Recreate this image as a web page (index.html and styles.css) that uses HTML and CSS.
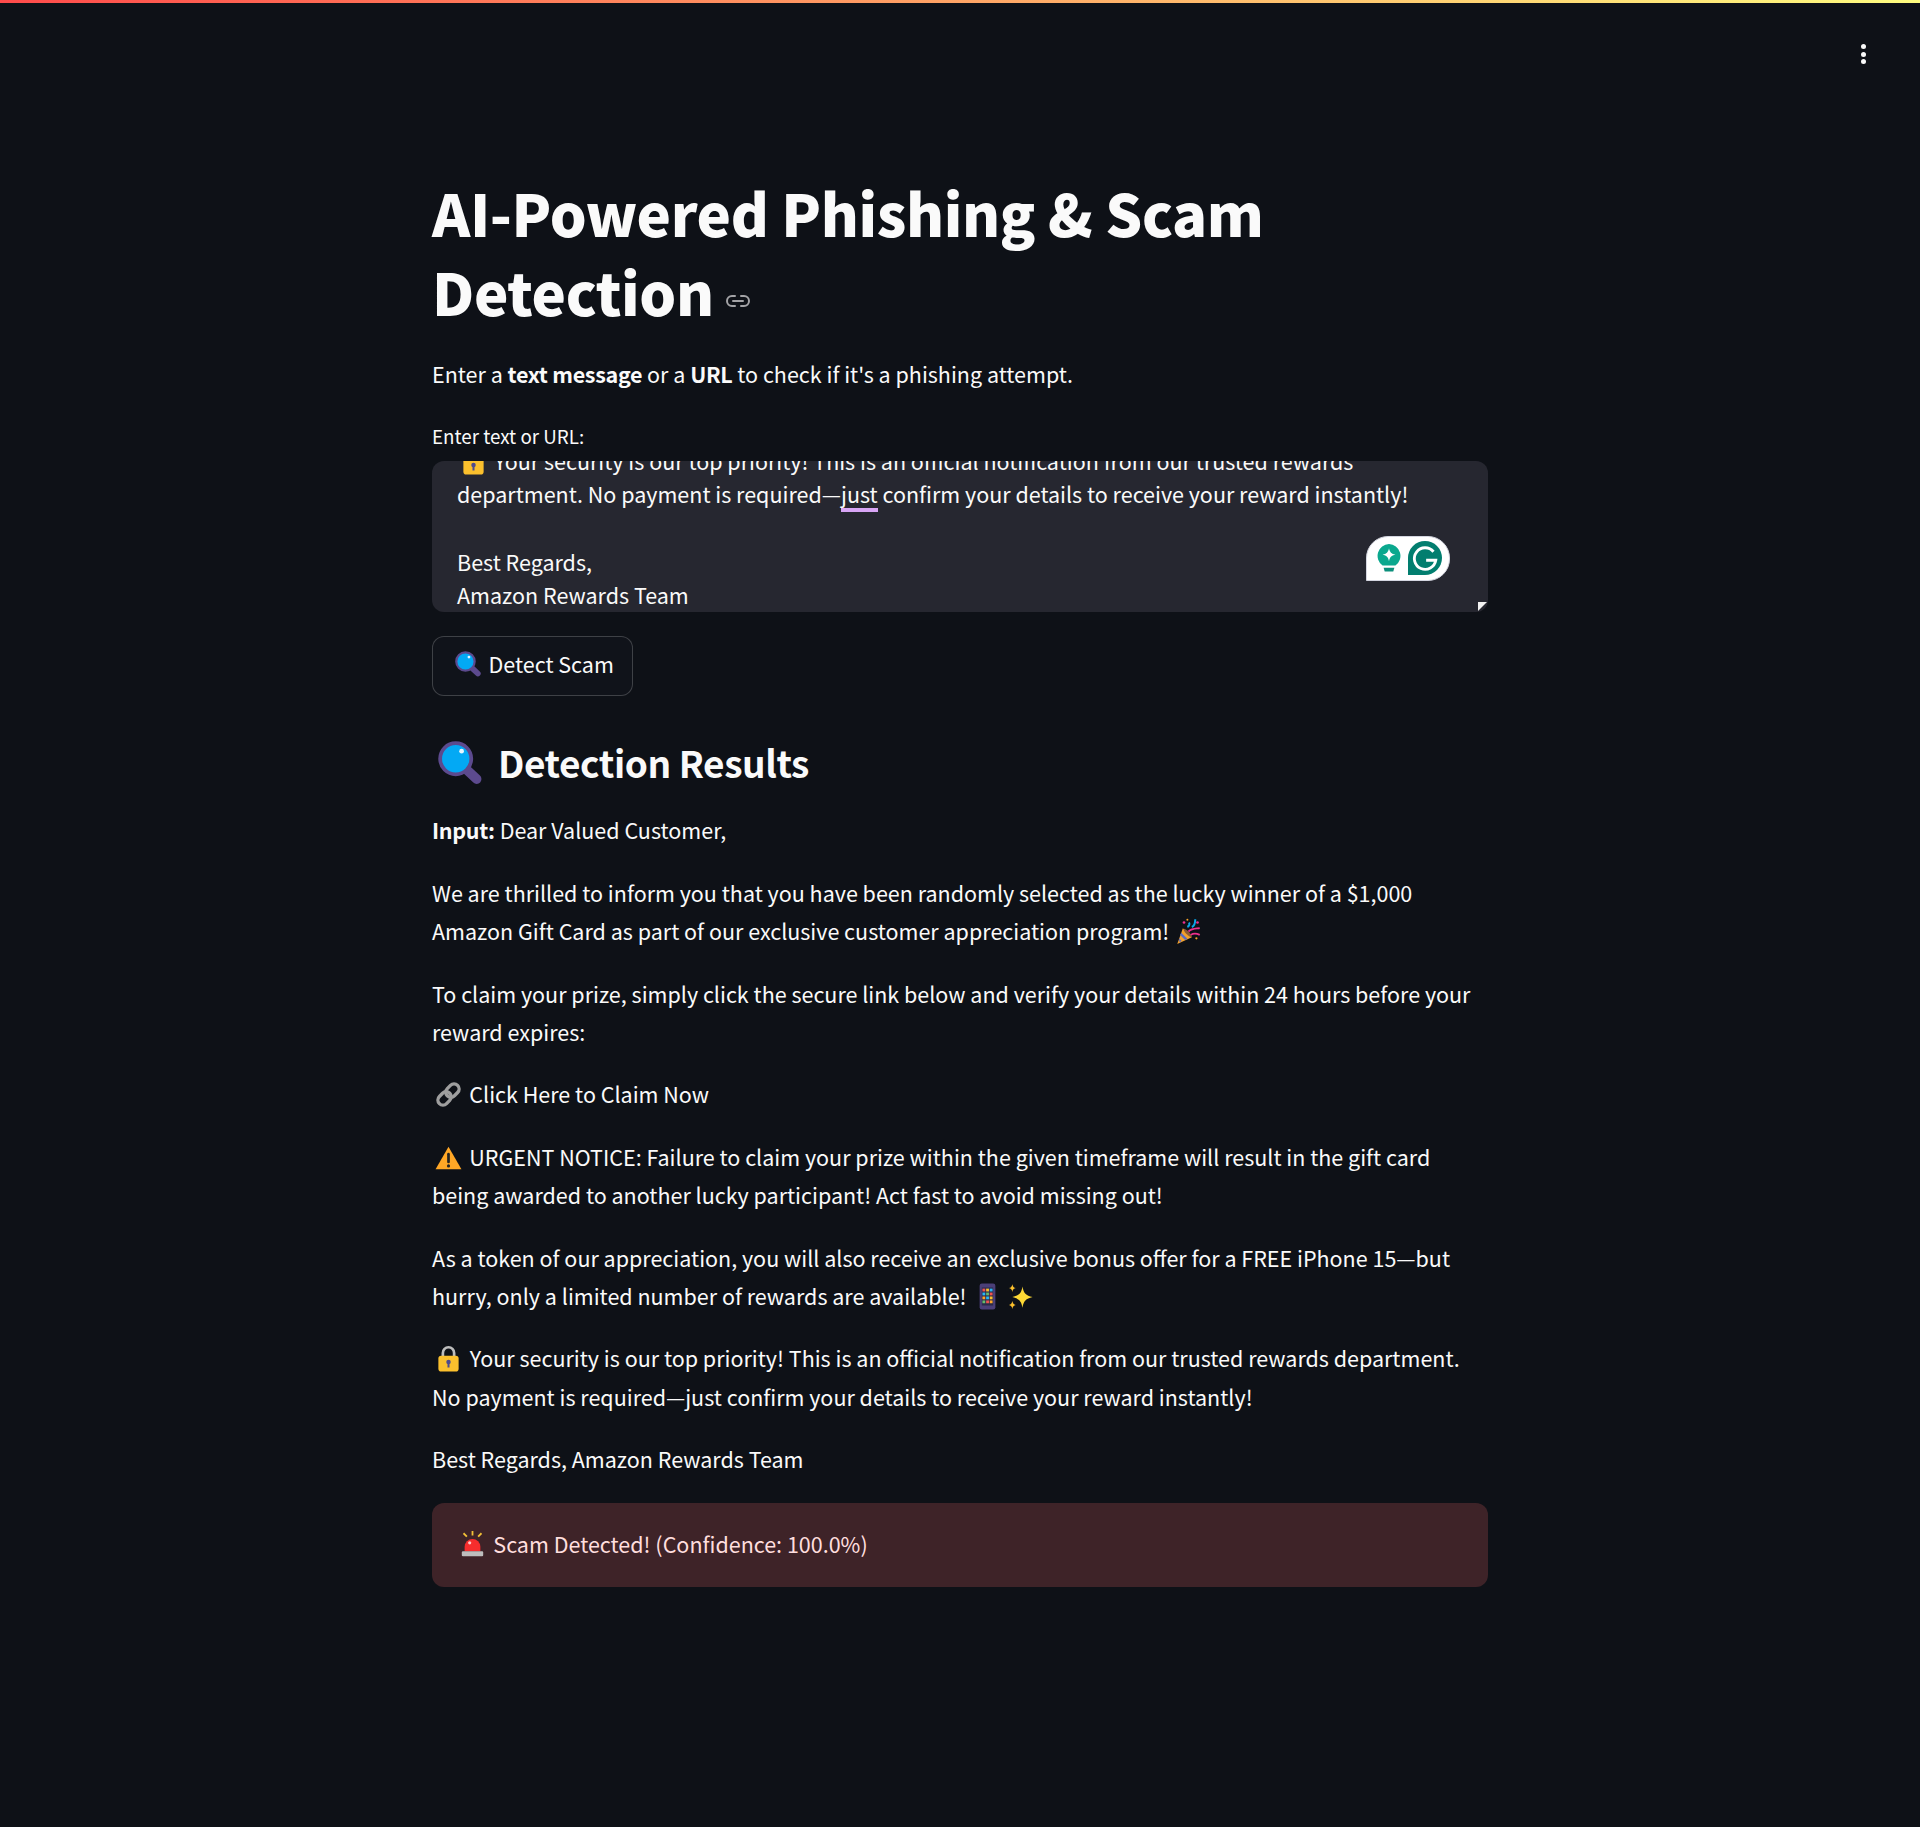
FILE: index.html
```html
<!DOCTYPE html>
<html lang="en">
<head>
<meta charset="utf-8">
<title>AI-Powered Phishing &amp; Scam Detection</title>
<link rel="stylesheet" href="styles.css">
</head>
<body>
<svg class="defs" aria-hidden="true">
  <symbol id="i-mag" viewBox="0 0 41 41">
    <path d="M27 27l9 8.500" stroke="#5c4a8e" stroke-width="9" stroke-linecap="round" fill="none"/>
    <circle cx="16.500" cy="16.500" r="14.500" fill="#03a9f4" stroke="#5c4a8e" stroke-width="3.500"/>
    <circle cx="22" cy="9.500" r="2.200" fill="#e8f7ff"/>
  </symbol>
  <symbol id="i-lock" viewBox="0 0 21 24">
    <path d="M5.500 11V7a5 5 0 0 1 10 0v4" fill="none" stroke="#bdbdbd" stroke-width="2.400"/>
    <rect x="1.500" y="9.500" width="18" height="14" rx="2.500" fill="#fbc02d"/>
    <circle cx="10.500" cy="15" r="2" fill="#4e4a8e"/>
    <rect x="9.600" y="15" width="1.800" height="5" fill="#4e4a8e"/>
  </symbol>
</svg>

<div class="deco"></div>
<div class="toolbar">
  <span class="kebab"><i></i><i></i><i></i></span>
</div>

<main class="block">
  <h1 class="title">AI-Powered Phishing &amp; Scam Detection <svg class="anchor" viewBox="0 0 26 14"><path d="M10 2H7a5 5 0 0 0 0 10h3M16 2h3a5 5 0 0 1 0 10h-3M8 7h10" fill="none" stroke="#a3a3a6" stroke-width="2" stroke-linecap="round"/></svg></h1>
  <p class="intro">Enter a <strong>text message</strong> or a <strong>URL</strong> to check if it's a phishing attempt.</p>

  <div class="label">Enter text or URL:</div>
  <div class="area">
    <div class="area-text">
      <div class="line"><svg class="emoji e-lock-a"><use href="#i-lock"/></svg> Your security is our top priority! This is an official notification from our trusted rewards</div>
      <div class="line">department. No payment is required—<span class="mark">just</span> confirm your details to receive your reward instantly!</div>
      <div class="line">&nbsp;</div>
      <div class="line">Best Regards,</div>
      <div class="line">Amazon Rewards Team</div>
    </div>
    <div class="grammarly">
      <svg class="g-bulb" viewBox="0 0 24 28"><path d="M12 1a11 11 0 0 0-6 20h12a11 11 0 0 0-6-20z" fill="#0aa88e"/><path d="M7 23h10l-1 3.500H8z" fill="#0b8f7b"/><path d="M12 5c.8 3.800 2.200 5.200 6 6-3.800.8-5.200 2.200-6 6-.8-3.800-2.200-5.200-6-6 3.800-.8 5.200-2.200 6-6z" fill="#fff"/></svg>
      <svg class="g-logo" viewBox="0 0 30 30"><path d="M15 0a15 15 0 0 1 0 30H0V15A15 15 0 0 1 15 0z" fill="#027e6f"/><path d="M22.500 9.500a9.500 9.500 0 1 0 2 7.500H16" fill="none" stroke="#fff" stroke-width="2.500"/></svg>
    </div>
    <svg class="grip" viewBox="0 0 9 9"><path d="M0 9V0h9z" fill="#f2f2f2"/></svg>
  </div>

  <button class="btn" type="button"><svg class="emoji e-btn"><use href="#i-mag"/></svg><span>Detect Scam</span></button>

  <h2 class="sub"><svg class="emoji e-h2"><use href="#i-mag"/></svg>Detection Results</h2>

  <p class="para"><strong>Input:</strong> Dear Valued Customer,</p>
  <p class="para">We are thrilled to inform you that you have been randomly selected as the lucky winner of a $1,000 Amazon Gift Card as part of our exclusive customer appreciation program! <svg class="emoji e-party" viewBox="0 0 24 24"><path d="M7 9l8 8L2 23z" fill="#f4a12a"/><path d="M5.500 13l5.500 5.500-2 1-4.500-4.500zM3.500 18l2.500 2.500-2 1z" fill="#5c6bc0"/><path d="M8 9.500c3 1 6 4 7 7-1 1-3-.5-4.500-2S7 10.500 8 9.500z" fill="#8d5a33"/><path d="M12 12c3-3 6-2.500 10-3M14 15c3-2 5-1.500 8 0" fill="none" stroke="#ec2f8c" stroke-width="1.600"/><path d="M11 8c2-1 2-3 1.500-4M15 8c2-1 3-4 3-7" fill="none" stroke="#0aa5e8" stroke-width="1.800"/><circle cx="8" cy="4" r="1.200" fill="#ec2f8c"/><circle cx="20" cy="4" r="1.200" fill="#ec2f8c"/><circle cx="11" cy="1.500" r=".9" fill="#f4a12a"/><circle cx="19" cy="18" r="1" fill="#f4a12a"/></svg></p>
  <p class="para">To claim your prize, simply click the secure link below and verify your details within 24 hours before your reward expires:</p>
  <p class="para"><svg class="emoji" viewBox="0 0 24 24"><g fill="none" stroke="#9e9e9e" stroke-width="3"><rect x="2" y="11" width="13" height="9" rx="4.500" transform="rotate(-45 8.500 15.500)"/><rect x="9" y="4" width="13" height="9" rx="4.500" transform="rotate(-45 15.500 8.500)"/></g></svg> Click Here to Claim Now</p>
  <p class="para"><svg class="emoji" viewBox="0 0 24 24"><path d="M12 2.500L23.500 22.500H.5z" fill="#ffa726"/><path d="M12 9v7" stroke="#222" stroke-width="2.400" stroke-linecap="round"/><circle cx="12" cy="19.500" r="1.400" fill="#222"/></svg> URGENT NOTICE: Failure to claim your prize within the given timeframe will result in the gift card being awarded to another lucky participant! Act fast to avoid missing out!</p>
  <p class="para">As a token of our appreciation, you will also receive an exclusive bonus offer for a FREE iPhone 15—but hurry, only a limited number of rewards are available! <svg class="emoji" viewBox="0 0 24 24"><rect x="5" y="0.500" width="14" height="23" rx="2" fill="#4b3f78"/><rect x="7" y="4" width="10" height="16" fill="#2b2b4a"/><path d="M7.500 5h2.500v2.500H7.500z" fill="#ef5350"/><path d="M10.800 5h2.500v2.500h-2.500z" fill="#fbc02d"/><path d="M14 5h2.500v2.500H14z" fill="#29b6f6"/><path d="M7.500 8.500h2.500V11H7.500z" fill="#29b6f6"/><path d="M10.800 8.500h2.500V11h-2.500z" fill="#66bb6a"/><path d="M14 8.500h2.500V11H14z" fill="#ef5350"/><path d="M7.500 12h2.500v2.500H7.500z" fill="#ffa726"/><path d="M10.800 12h2.500v2.500h-2.500z" fill="#29b6f6"/><path d="M14 12h2.500v2.500H14z" fill="#fbc02d"/><path d="M7.500 15.500h2.500V18H7.500z" fill="#66bb6a"/><path d="M10.800 15.500h2.500V18h-2.500z" fill="#ef5350"/><path d="M14 15.500h2.500V18H14z" fill="#ffa726"/></svg><svg class="emoji e-spark" viewBox="1 0 22.500 24"><path d="M14 3c1 6 3 8 9 9.500-6 1.500-8 3.500-9 9.500-1-6-3-8-9-9.500 6-1.500 8-3.500 9-9.500z" fill="#fdd835"/><path d="M5 1c.4 2.200 1.300 3.100 3 3.500-1.700.4-2.600 1.300-3 3.500-.4-2.200-1.300-3.100-3-3.500 1.700-.4 2.600-1.300 3-3.500zM5 16c.4 2.200 1.300 3.100 3 3.500-1.700.4-2.600 1.300-3 3.500-.4-2.200-1.300-3.100-3-3.500 1.700-.4 2.600-1.300 3-3.500z" fill="#fbc02d"/></svg></p>
  <p class="para"><svg class="emoji e-lock"><use href="#i-lock"/></svg> Your security is our top priority! This is an official notification from our trusted rewards department. No payment is required—just confirm your details to receive your reward instantly!</p>
  <p class="para">Best Regards, Amazon Rewards Team</p>

  <div class="alert"><svg class="emoji" viewBox="0 0 24 24"><path d="M12 0v4M4 2l3 3M20 2l-3 3" stroke="#f2c037" stroke-width="1.600" fill="none"/><path d="M5 18v-4a7 7 0 0 1 14 0v4z" fill="#f62d2d"/><circle cx="9.500" cy="10.500" r="1.400" fill="#ffc9c9"/><rect x="2.500" y="18" width="19" height="4.500" rx="1" fill="#bdbdbd"/></svg> Scam Detected! (Confidence: 100.0%)</div>
</main>
</body>
</html>
```

FILE: styles.css
```css
html, body {
  margin: 0;
  padding: 0;
  background: #0e1117;
}
body {
  min-height: 1827px;
  color: #fafafa;
  font-family: "Noto Sans CJK JP", "Noto Sans", sans-serif;
  font-size: 21.500px;
  line-height: 38.400px;
  overflow: hidden;
}
.defs {
  position: absolute;
  width: 0;
  height: 0;
}
.deco {
  height: 3px;
  background: linear-gradient(90deg, #ff4b4b, #fffd80);
}
.toolbar {
  display: flex;
  justify-content: flex-end;
  padding: 41px 54.500px 0 0;
  height: 20px;
}
.kebab {
  display: flex;
  flex-direction: column;
  gap: 2.500px;
}
.kebab i {
  width: 5px;
  height: 5px;
  border-radius: 50%;
  background: #fafafa;
}
.block {
  width: 1056px;
  margin: 0 auto;
  padding-top: 109px;
}
.title {
  margin: 0 0 23.500px;
  font-size: 58px;
  letter-spacing: -0.400px;
  line-height: 79.200px;
  font-weight: 900;
}
.anchor {
  width: 26px;
  height: 14px;
  margin-left: -2px;
  vertical-align: 8px;
}
.intro, .para {
  margin: 0 0 24px;
}
.intro {
  margin-bottom: 31px;
}
strong {
  font-weight: 700;
  letter-spacing: -0.300px;
}
.label {
  font-size: 18.800px;
  line-height: 24px;
  margin-bottom: 12.500px;
}
.area {
  position: relative;
  height: 151px;
  background: #262730;
  border-radius: 12px;
  overflow: hidden;
}
.area-text {
  position: absolute;
  left: 25px;
  right: 25px;
  bottom: 0;
  line-height: 33.600px;
}
.line {
  white-space: nowrap;
}
.mark {
  display: inline-block;
  line-height: 28px;
  border-bottom: 4px solid #d8a5f5;
  margin-bottom: -4px;
}
.grammarly {
  position: absolute;
  left: 934px;
  top: 75px;
  width: 84px;
  height: 45px;
  box-sizing: border-box;
  display: flex;
  align-items: center;
  gap: 6px;
  padding-left: 9px;
  background: #fff;
  border: 1px solid #d4d6e0;
  border-radius: 22px 22px 22px 0;
}
.g-bulb {
  width: 26px;
  height: 30px;
}
.g-logo {
  width: 34px;
  height: 34px;
}
.grip {
  position: absolute;
  right: 1px;
  bottom: 1px;
  width: 9px;
  height: 9px;
}
.btn {
  display: inline-flex;
  align-items: center;
  gap: 7.500px;
  height: 60px;
  width: 201px;
  margin-top: 24px;
  padding: 0 0 3px 22px;
  box-sizing: border-box;
  color: #fafafa;
  background: #10131a;
  border: 1.500px solid rgba(250, 250, 250, 0.2);
  border-radius: 12px;
  font: inherit;
}
.sub {
  display: flex;
  align-items: center;
  margin: 37.500px 0 20px;
  font-size: 37px;
  letter-spacing: -0.430px;
  line-height: 58px;
  font-weight: 700;
}
.emoji {
  width: 27px;
  height: 27px;
  vertical-align: -5px;
  margin: 0 2.500px 0 3px;
}
.e-btn {
  width: 26px;
  height: 26px;
  margin: 0;
}
.e-h2 {
  width: 44px;
  height: 44px;
  margin: 2px 16px 0 6px;
}
.e-lock-a {
  margin-left: 3px;
}
.e-lock {
  margin-right: 3px;
}
.e-party {
  margin-left: 1px;
}
.e-spark {
  margin-left: 3px;
}
.alert {
  margin-top: 20px;
  padding: 22px 24px;
  height: 84px;
  box-sizing: border-box;
  border-radius: 12px;
  background: #3e2328;
  color: #ffdede;
}
.alert .emoji {
  margin: 0 2.500px 0 3px;
}
```
